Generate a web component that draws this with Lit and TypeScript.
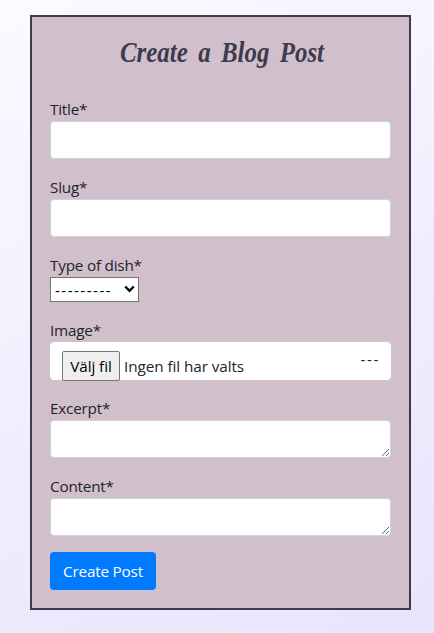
import { LitElement, html, css } from "lit";
import { customElement } from "lit/decorators.js";

@customElement("app-root")
export class AppRoot extends LitElement {
  static styles = css`
    :host {
      display: block;
      box-sizing: border-box;
      height: 633px;
      padding: 15px 23px 23px 30px;
      background: linear-gradient(155deg, #fafaff, #e8e4fd);
      font: 15.3px/24px "Open Sans", "Noto Sans", sans-serif;
      letter-spacing: -0.22px;
      color: #212529;
    }
    * { box-sizing: border-box; }
    .card {
      height: 595px;
      border: 2px solid #3d3b4f;
      background: #d1c0cc;
      padding: 0 18px;
    }
    .title {
      display: block;
      margin: 0;
      height: 80px;
    }
    .title svg { display: block; width: 341px; height: 80px; }
    .title text {
      font: italic bold 30px "Brush Script MT", "Liberation Serif", cursive;
      letter-spacing: 0;
      word-spacing: 5px;
      fill: #3d3b4f;
    }
    form { display: flex; flex-direction: column; gap: 16px; align-items: stretch; }
    .field { display: flex; flex-direction: column; }
    label { height: 24px; }
    .control {
      display: block;
      width: 100%;
      height: 38px;
      margin: 0;
      padding: 6px 12px;
      border: 1px solid #ced4da;
      border-radius: 4px;
      background: #fff;
      font: inherit;
      outline: none;
    }
    textarea.control { resize: vertical; overflow: hidden; }
    .select {
      display: flex;
      align-items: center;
      justify-content: space-between;
      width: 89px;
      height: 25px;
      padding: 0 3px 0 4px;
      border: 1px solid #767676;
      background: #fff;
      color: #000;
    }
    .select svg { display: block; width: 11px; height: 8px; margin-bottom: 1px; }
    .dashes { height: 24px; line-height: 24px; letter-spacing: 1.42px; }
    .file { display: flex; border-color: #fff; padding: 8px 10px 0 11px; }
    .pick {
      flex: none;
      width: 58px;
      height: 30px;
      border: 1px solid #767676;
      border-radius: 2px;
      background: #efefef;
      color: #000;
      font: inherit;
      letter-spacing: -0.1px;
      padding: 0;
      white-space: nowrap;
    }
    .name { margin: 3px 0 0 4px; letter-spacing: -0.08px; }
    .mark { margin: -4px 0 0 auto; letter-spacing: 1.6px; }
    .submit {
      align-self: flex-start;
      width: 106px;
      height: 38px;
      border: 0;
      border-radius: 4px;
      padding: 0;
      background: #007bff;
      color: #fff;
      font: inherit;
      letter-spacing: -0.2px;
    }
  `;

  render() {
    return html`
      <main class="card">
        <h1 class="title">
          <svg viewBox="0 0 341 80">
            <text x="70" y="45" textLength="204" lengthAdjust="spacingAndGlyphs">Create a Blog Post</text>
          </svg>
        </h1>
        <form>
          <div class="field"><label for="title">Title*</label><input id="title" class="control" /></div>
          <div class="field"><label for="slug">Slug*</label><input id="slug" class="control" /></div>
          <div class="field">
            <label>Type of dish*</label>
            <div class="select" role="combobox">
              <span class="dashes">---------</span>
              <svg viewBox="0 0 11 8"><path d="M1.2 1.5 5.5 5.8 9.8 1.5" fill="none" stroke="#000" stroke-width="2.4" /></svg>
            </div>
          </div>
          <div class="field">
            <label>Image*</label>
            <div class="control file">
              <button type="button" class="pick">Välj fil</button>
              <span class="name">Ingen fil har valts</span>
              <span class="mark">---</span>
            </div>
          </div>
          <div class="field"><label for="excerpt">Excerpt*</label><textarea id="excerpt" class="control"></textarea></div>
          <div class="field"><label for="content">Content*</label><textarea id="content" class="control"></textarea></div>
          <button type="button" class="submit">Create Post</button>
        </form>
      </main>
    `;
  }
}
